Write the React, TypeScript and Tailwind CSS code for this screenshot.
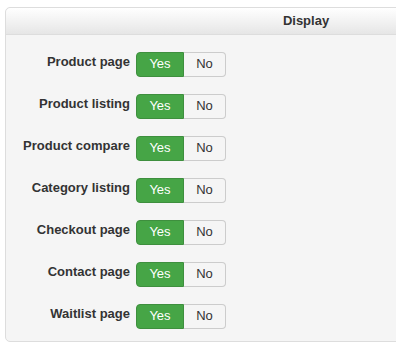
const rows = [
  "Product page",
  "Product listing",
  "Product compare",
  "Category listing",
  "Checkout page",
  "Contact page",
  "Waitlist page",
];

function YesNo() {
  return (
    <div className="flex h-[25px] text-[13px]">
      <button className="w-[48px] rounded-l-[4px] border border-[#3e8f3e] bg-[#46a546] text-white">
        Yes
      </button>
      <button className="w-[42px] rounded-r-[4px] border border-l-0 border-[#cccccc] bg-[#f5f5f5] text-[#333]">
        No
      </button>
    </div>
  );
}

export default function App() {
  return (
    <div
      className="h-[354px] w-[396px] overflow-hidden bg-white pl-[5px] pt-[7px]"
      style={{ fontFamily: '"Liberation Sans", Arial, sans-serif' }}
    >
      <div className="w-[602px] rounded-[5px] border border-[#dddddd] bg-[#f5f5f5]">
        <div className="flex h-[27px] items-center justify-center rounded-t-[5px] border-b border-[#dddddd] bg-gradient-to-b from-[#ffffff] to-[#e6e6e6] text-[13px] font-bold text-[#333]">
          Display
        </div>
        <div className="pb-[4px] pt-[8px]">
          {rows.map((label) => (
            <div key={label} className="flex h-[42px] items-center gap-[6px]">
              <div className="mb-[4px] w-[124px] text-right text-[13px] font-bold text-[#333]">
                {label}
              </div>
              <YesNo />
            </div>
          ))}
        </div>
      </div>
    </div>
  );
}
